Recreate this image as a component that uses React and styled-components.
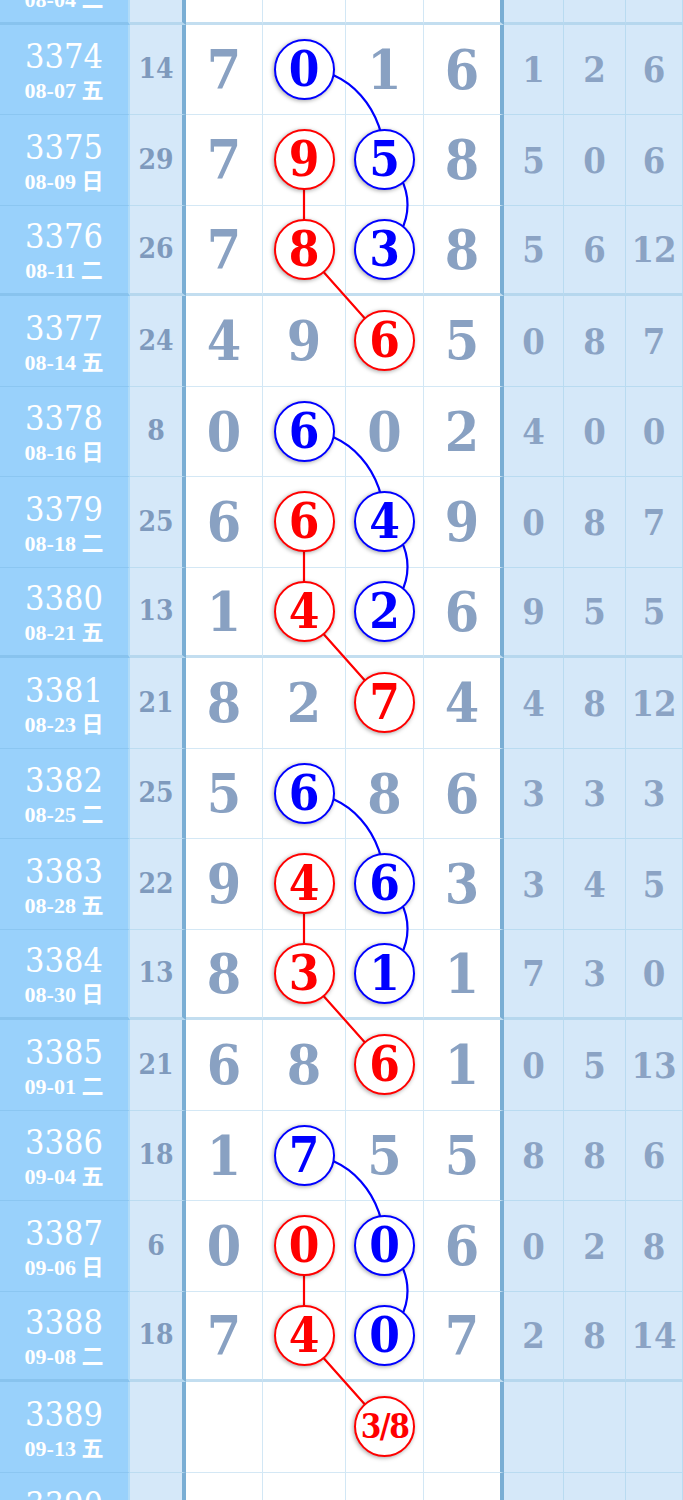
import React from 'react';
import styled, { createGlobalStyle } from 'styled-components';

const ROW_H = 90.5;
const C4 = 304;
const C5 = 384.5;
const BLUE = '#0000ff';
const RED = '#ff0000';

const Global = createGlobalStyle`
  html, body { margin: 0; padding: 0; background: #ffffff; overflow: hidden; }
  body { font-family: "DejaVu Serif", "Noto Sans CJK SC", serif; }
`;

const Viewport = styled.div`
  height: 1500px;
  overflow: hidden;
`;

const Sheet = styled.div`
  position: relative;
  margin-top: -66px;
  width: 683px;
`;

const Row = styled.div`
  display: grid;
  grid-template-columns: 130px 56px 77px 83px 78px 80px 60px 62px 57px;
  height: ${ROW_H}px;
`;

const CellBase = styled.div`
  box-sizing: border-box;
  display: flex;
  align-items: center;
  justify-content: center;
  font-family: "DejaVu Serif", "Noto Sans CJK SC", serif;
  font-stretch: condensed;
  font-weight: 700;
  line-height: 1;
`;

const PeriodCell = styled(CellBase)`
  flex-direction: column;
  gap: 7px;
  padding-top: 3px;
  background: #99d1fb;
  color: #ffffff;
  border-right: 2px solid #b0dbf8;
  border-bottom: ${(p) => (p.$thick ? '3px solid #88c3ee' : '1px solid #8bc6f1')};
`;

const Period = styled.span`
  font-size: 34px;
  font-weight: 400;
`;

const DateText = styled.span`
  font-family: "Liberation Serif", "Noto Sans CJK SC", serif;
  font-stretch: normal;
  font-size: 22px;
  font-weight: 700;
  white-space: nowrap;
`;

const SumCell = styled(CellBase)`
  background: #d5e8f9;
  color: #7f9abd;
  font-size: 28px;
  border-right: 4px solid #7aaed4;
  border-bottom: ${(p) => (p.$thick ? '3px solid #b6d7ee' : '1px solid #bcdcf1')};
`;

const MainCell = styled(CellBase)`
  background: #ffffff;
  color: #89a1c2;
  font-size: 55px;
  border-right: ${(p) => (p.$edge ? '4px solid #7aaed4' : '1px solid #d2e7f5')};
  border-bottom: ${(p) => (p.$thick ? '3px solid #c3def0' : '1px solid #d4e8f5')};
`;

const RightCell = styled(CellBase)`
  background: #d5e8f9;
  color: #8ba3c4;
  font-size: 36px;
  border-right: 1px solid #b9dbf1;
  border-bottom: ${(p) => (p.$thick ? '3px solid #b6d7ee' : '1px solid #b9dbf1')};
`;

const Ball = styled.span`
  position: relative;
  z-index: 2;
  box-sizing: border-box;
  width: 61px;
  height: 61px;
  border-radius: 50%;
  border: 2.5px solid ${(p) => p.$color};
  background: #ffffff;
  color: ${(p) => p.$color};
  display: flex;
  align-items: center;
  justify-content: center;
  font-size: ${(p) => (p.$small ? '33px' : '49px')};
  letter-spacing: ${(p) => (p.$small ? '-1.5px' : '0')};
  font-weight: 700;
  line-height: 1;
  box-shadow: -1px 1px 4px rgba(0, 0, 0, 0.35);
`;

const Overlay = styled.svg`
  position: absolute;
  left: 0;
  top: 0;
  z-index: 1;
  pointer-events: none;
`;

const rows = [
  { p: '3373', d: '08-04 二', s: '', m: ['', '', '', ''], r: ['', '', ''], thick: true },
  { p: '3374', d: '08-07 五', s: '14', m: ['7', 'b0', '1', '6'], r: ['1', '2', '6'] },
  { p: '3375', d: '08-09 日', s: '29', m: ['7', 'r9', 'b5', '8'], r: ['5', '0', '6'] },
  { p: '3376', d: '08-11 二', s: '26', m: ['7', 'r8', 'b3', '8'], r: ['5', '6', '12'], thick: true },
  { p: '3377', d: '08-14 五', s: '24', m: ['4', '9', 'r6', '5'], r: ['0', '8', '7'] },
  { p: '3378', d: '08-16 日', s: '8', m: ['0', 'b6', '0', '2'], r: ['4', '0', '0'] },
  { p: '3379', d: '08-18 二', s: '25', m: ['6', 'r6', 'b4', '9'], r: ['0', '8', '7'] },
  { p: '3380', d: '08-21 五', s: '13', m: ['1', 'r4', 'b2', '6'], r: ['9', '5', '5'], thick: true },
  { p: '3381', d: '08-23 日', s: '21', m: ['8', '2', 'r7', '4'], r: ['4', '8', '12'] },
  { p: '3382', d: '08-25 二', s: '25', m: ['5', 'b6', '8', '6'], r: ['3', '3', '3'] },
  { p: '3383', d: '08-28 五', s: '22', m: ['9', 'r4', 'b6', '3'], r: ['3', '4', '5'] },
  { p: '3384', d: '08-30 日', s: '13', m: ['8', 'r3', 'b1', '1'], r: ['7', '3', '0'], thick: true },
  { p: '3385', d: '09-01 二', s: '21', m: ['6', '8', 'r6', '1'], r: ['0', '5', '13'] },
  { p: '3386', d: '09-04 五', s: '18', m: ['1', 'b7', '5', '5'], r: ['8', '8', '6'] },
  { p: '3387', d: '09-06 日', s: '6', m: ['0', 'r0', 'b0', '6'], r: ['0', '2', '8'] },
  { p: '3388', d: '09-08 二', s: '18', m: ['7', 'r4', 'b0', '7'], r: ['2', '8', '14'], thick: true },
  { p: '3389', d: '09-13 五', s: '', m: ['', '', 'r3/8', ''], r: ['', '', ''] },
  { p: '3390', d: '09-15 日', s: '', m: ['', '', '', ''], r: ['', '', ''] },
];

const groupStarts = [1, 5, 9, 13];
const cy = (i) => i * ROW_H + 44.5;

function MainValue({ v }) {
  if (v.startsWith('b')) return <Ball $color={BLUE}>{v.slice(1)}</Ball>;
  if (v.startsWith('r')) {
    const t = v.slice(1);
    return <Ball $color={RED} $small={t.length > 1}>{t}</Ball>;
  }
  return v;
}

function Links() {
  const h = rows.length * ROW_H;
  return (
    <Overlay width={683} height={h} viewBox={`0 0 683 ${h}`}>
      {groupStarts.map((g) => (
        <g key={g} fill="none" strokeWidth="2.2">
          <path d={`M ${C4} ${cy(g)} A ${C5 - C4} ${ROW_H} 0 0 1 ${C5} ${cy(g + 1)}`} stroke={BLUE} />
          <path d={`M ${C5} ${cy(g + 1)} A 56 56 0 0 1 ${C5} ${cy(g + 2)}`} stroke={BLUE} />
          <path d={`M ${C4} ${cy(g + 1)} L ${C4} ${cy(g + 2)} L ${C5} ${cy(g + 3)}`} stroke={RED} />
        </g>
      ))}
    </Overlay>
  );
}

export default function App() {
  return (
    <Viewport>
      <Global />
      <Sheet>
        <Links />
        {rows.map((row) => (
          <Row key={row.p}>
            <PeriodCell $thick={row.thick}>
              <Period>{row.p}</Period>
              <DateText>{row.d}</DateText>
            </PeriodCell>
            <SumCell $thick={row.thick}>{row.s}</SumCell>
            {row.m.map((v, j) => (
              <MainCell key={j} $thick={row.thick} $edge={j === 3}>
                <MainValue v={v} />
              </MainCell>
            ))}
            {row.r.map((v, j) => (
              <RightCell key={j} $thick={row.thick}>{v}</RightCell>
            ))}
          </Row>
        ))}
      </Sheet>
    </Viewport>
  );
}
